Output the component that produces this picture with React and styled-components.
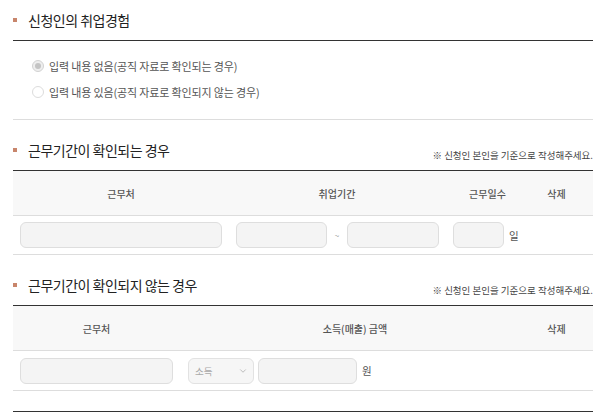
import React from "react";
import styled, { createGlobalStyle } from "styled-components";
import { ChevronDown } from "lucide-react";

const Global = createGlobalStyle`
  html, body { margin: 0; padding: 0; background: #fff; }
  body { font-family: "Noto Sans CJK KR", "Noto Sans", sans-serif; color: #333; }
  * { box-sizing: border-box; }
`;

const Page = styled.div`
  width: 580px;
  margin-left: 13px;
`;

const TitleRow = styled.div`
  height: ${(p) => p.$h || 50}px;
  display: flex;
  align-items: flex-end;
  justify-content: space-between;
  padding-bottom: 10px;
`;

const Title = styled.h2`
  margin: 0;
  display: flex;
  align-items: center;
  gap: 11px;
  font-size: 14px;
  line-height: 20px;
  font-weight: 400;
  letter-spacing: -0.5px;
  color: #222;
  &::before {
    content: "";
    width: 4px;
    height: 4px;
    background: #c8856b;
    margin-top: -1px;
  }
`;

const Note = styled.p`
  margin: 0 0 -2px;
  font-size: 9.5px;
  line-height: 14px;
  color: #444;
`;

const RadioGroup = styled.div`
  border-top: 1px solid #333;
  border-bottom: 1px solid #ddd;
  padding: 12px 0 14px 19px;
  display: flex;
  flex-direction: column;
`;

const RadioLabel = styled.label`
  height: 26px;
  display: flex;
  align-items: center;
  gap: 5px;
  font-size: 11px;
  letter-spacing: -0.15px;
  color: #555;
`;

const RadioDot = styled.span`
  width: 12px;
  height: 12px;
  border-radius: 50%;
  border: 1px solid ${(p) => (p.$checked ? "#d2d2d2" : "#dcdcdc")};
  background: ${(p) => (p.$checked ? "#eeeeee" : "#fff")};
  display: flex;
  align-items: center;
  justify-content: center;
  flex: none;
  &::after {
    content: "";
    width: 6px;
    height: 6px;
    border-radius: 50%;
    background: ${(p) => (p.$checked ? "#c4c4c4" : "transparent")};
  }
`;

const Table = styled.div`
  border-top: 1px solid #333;
  display: grid;
  grid-template-columns: ${(p) => p.$cols};
`;

const HeadCell = styled.div`
  height: 45px;
  background: #f8f8f8;
  border-bottom: 1px solid #ddd;
  display: flex;
  align-items: center;
  justify-content: center;
  padding-right: ${(p) => p.$pr || 0}px;
  font-size: 10px;
  font-weight: 500;
  color: #555;
`;

const Cell = styled.div`
  height: ${(p) => p.$h}px;
  border-bottom: 1px solid #ddd;
  display: flex;
  align-items: center;
  gap: 5px;
  padding-left: ${(p) => p.$pl ?? 7}px;
`;

const Field = styled.div`
  width: ${(p) => p.$w}px;
  height: 26px;
  border: 1px solid #dedede;
  border-radius: 6px;
  background: #f4f4f4;
  flex: none;
`;

const Select = styled.div`
  width: 66px;
  height: 26px;
  border: 1px solid #e2e2e2;
  border-radius: 6px;
  background: #f6f6f6;
  display: flex;
  align-items: center;
  justify-content: space-between;
  padding: 0 5px 0 6px;
  font-size: 9.5px;
  color: #aaa;
  margin-right: -1px;
`;

const Tilde = styled.span`
  width: 10px;
  text-align: center;
  font-size: 8px;
  color: #999;
`;

const Unit = styled.span`
  font-size: 10.5px;
  color: #555;
`;

const Divider = styled.div`
  margin-top: 20px;
  border-top: 1px solid #333;
`;

export default function App() {
  return (
    <>
      <Global />
      <Page>
        <TitleRow $h={40}>
          <Title>신청인의 취업경험</Title>
        </TitleRow>
        <RadioGroup>
          <RadioLabel>
            <RadioDot $checked />
            입력 내용 없음(공직 자료로 확인되는 경우)
          </RadioLabel>
          <RadioLabel>
            <RadioDot />
            입력 내용 있음(공직 자료로 확인되지 않는 경우)
          </RadioLabel>
        </RadioGroup>

        <TitleRow>
          <Title>근무기간이 확인되는 경우</Title>
          <Note>※ 신청인 본인을 기준으로 작성해주세요.</Note>
        </TitleRow>
        <Table $cols="216px 216px 85px 1fr">
          <HeadCell>근무처</HeadCell>
          <HeadCell>취업기간</HeadCell>
          <HeadCell>근무일수</HeadCell>
          <HeadCell $pr={10}>삭제</HeadCell>
          <Cell $h={39}>
            <Field $w={202} />
          </Cell>
          <Cell $h={39}>
            <Field $w={91} />
            <Tilde>~</Tilde>
            <Field $w={92} />
          </Cell>
          <Cell $h={39} $pl={8}>
            <Field $w={51} />
            <Unit>일</Unit>
          </Cell>
          <Cell $h={39} />
        </Table>

        <TitleRow>
          <Title>근무기간이 확인되지 않는 경우</Title>
          <Note>※ 신청인 본인을 기준으로 작성해주세요.</Note>
        </TitleRow>
        <Table $cols="167px 350px 1fr">
          <HeadCell>근무처</HeadCell>
          <HeadCell>소득(매출) 금액</HeadCell>
          <HeadCell $pr={10}>삭제</HeadCell>
          <Cell $h={40}>
            <Field $w={153} />
          </Cell>
          <Cell $h={40} $pl={8}>
            <Select>
              소득
              <ChevronDown size={10} strokeWidth={1.5} color="#999" />
            </Select>
            <Field $w={99} />
            <Unit>원</Unit>
          </Cell>
          <Cell $h={40} />
        </Table>
        <Divider />
      </Page>
    </>
  );
}
